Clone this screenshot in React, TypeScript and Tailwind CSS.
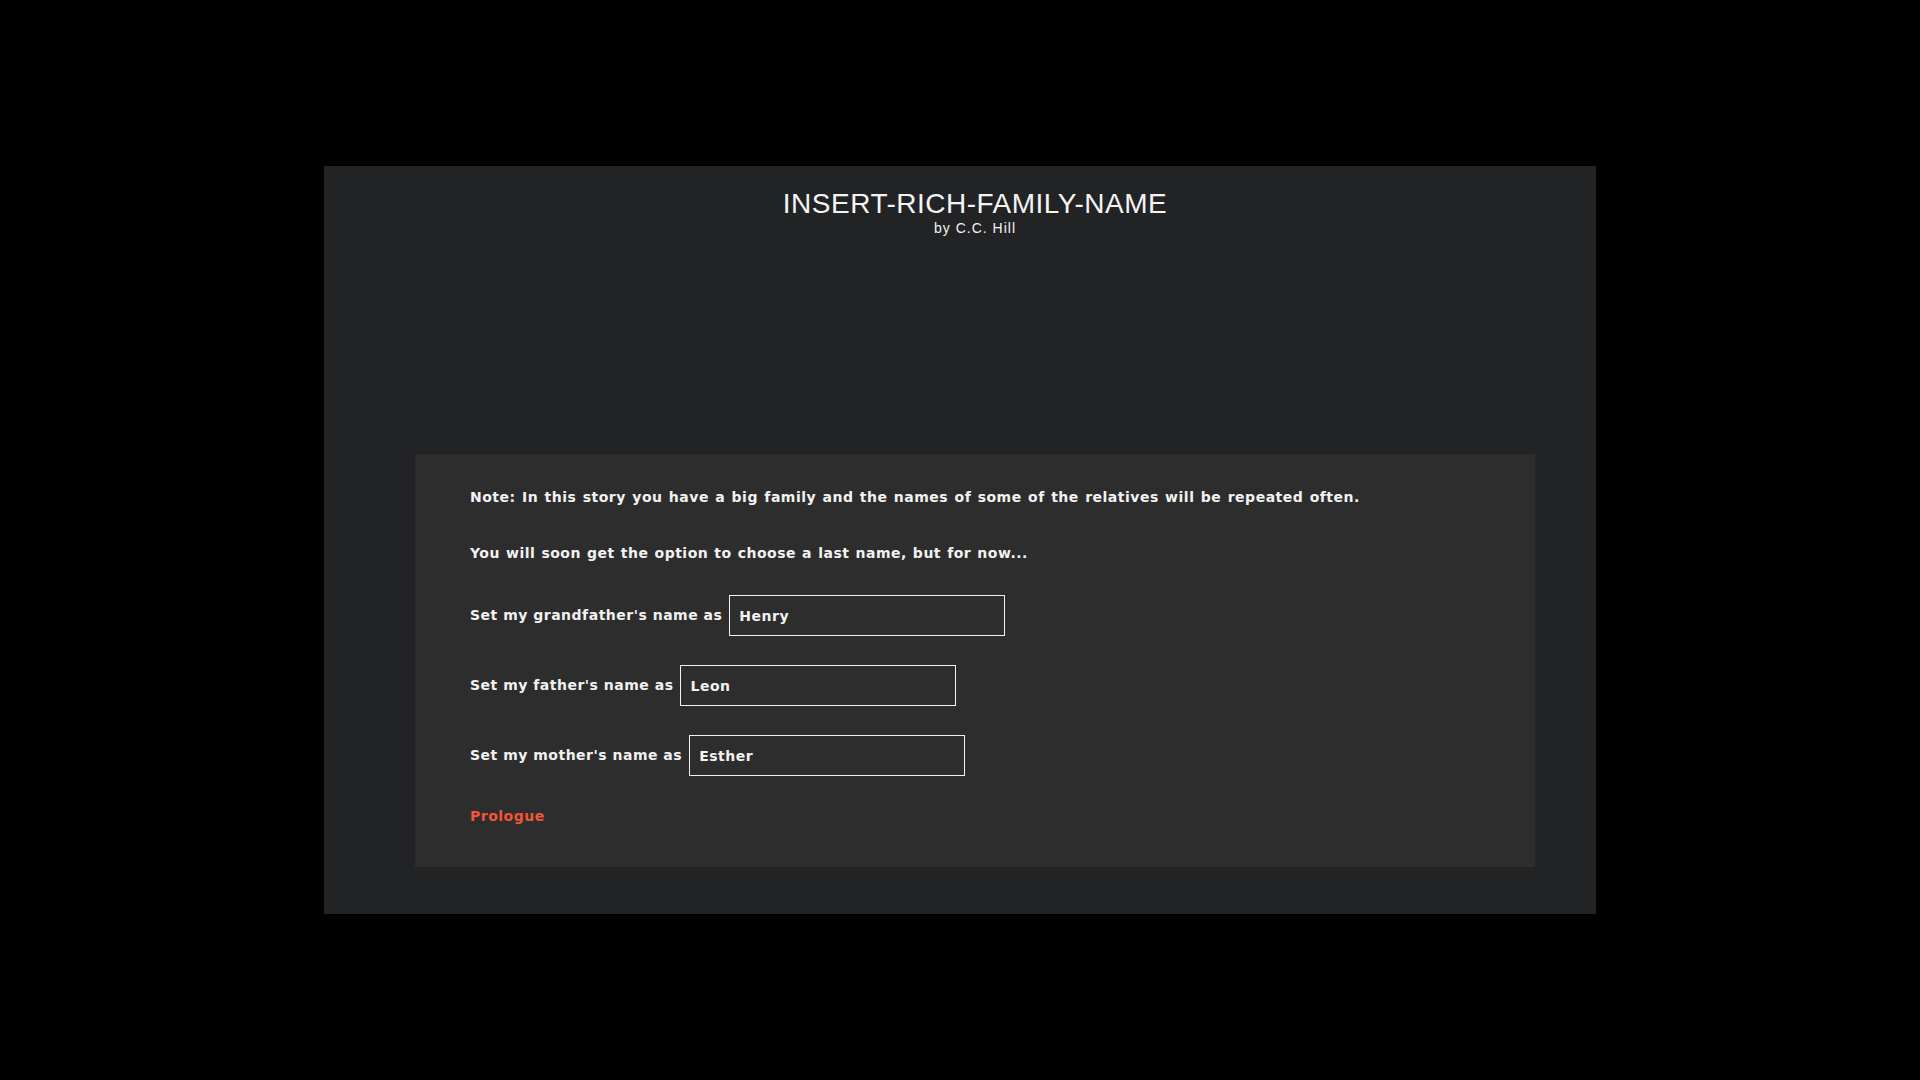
import React, { useState } from 'react';

const bodyFont = { fontFamily: '"DejaVu Sans", "Noto Sans", sans-serif' };

const NameRow: React.FC<{ label: string; value: string; onChange: (v: string) => void }> = ({ label, value, onChange }) => (
  <div className="flex items-center h-[41px]">
    <span>{label}</span>
    <input
      value={value}
      onChange={(e) => onChange(e.target.value)}
      className="ml-[7px] w-[276px] h-[41px] border border-[#f2f2f2] bg-transparent px-[9px] text-[#f2f2f2] font-bold tracking-[0.5px] text-[14px] outline-none"
      style={bodyFont}
    />
  </div>
);

export default function App() {
  const [grandfather, setGrandfather] = useState('Henry');
  const [father, setFather] = useState('Leon');
  const [mother, setMother] = useState('Esther');

  return (
    <div className="min-h-screen w-full bg-black flex items-center justify-center">
      <div className="w-[1272px] h-[748px] bg-[#222325] flex flex-col">
        {/* Header */}
        <header
          className="pt-[22px] ml-[91px] mr-[61px] text-center text-[#f4f4f4]"
          style={{ fontFamily: '"Liberation Sans", Arial, sans-serif' }}
        >
          <h1 className="text-[28px] leading-[32px] font-normal tracking-[0.5px]">INSERT-RICH-FAMILY-NAME</h1>
          <p className="text-[14px] leading-[16px] tracking-[1px]">by C.C. Hill</p>
        </header>

        {/* Passage */}
        <div
          className="mt-auto mb-[47px] ml-[91px] mr-[61px] bg-[#2d2d2d] pt-[33px] pb-[40px] pl-[55px] text-[#f2f2f2] text-[14px] leading-[21px] font-bold tracking-[0.5px]"
          style={bodyFont}
        >
          <p className="[word-spacing:1px]">
            Note: In this story you have a big family and the names of some of the relatives will be repeated often.
          </p>
          <p className="mt-[35px] [word-spacing:0.7px]">You will soon get the option to choose a last name, but for now...</p>
          <div className="mt-[31px] flex flex-col gap-[29px]">
            <NameRow label="Set my grandfather's name as" value={grandfather} onChange={setGrandfather} />
            <NameRow label="Set my father's name as" value={father} onChange={setFather} />
            <NameRow label="Set my mother's name as" value={mother} onChange={setMother} />
          </div>
          <p className="mt-[30px]">
            <a href="#" className="text-[#f4553a]">Prologue</a>
          </p>
        </div>
      </div>
    </div>
  );
}
